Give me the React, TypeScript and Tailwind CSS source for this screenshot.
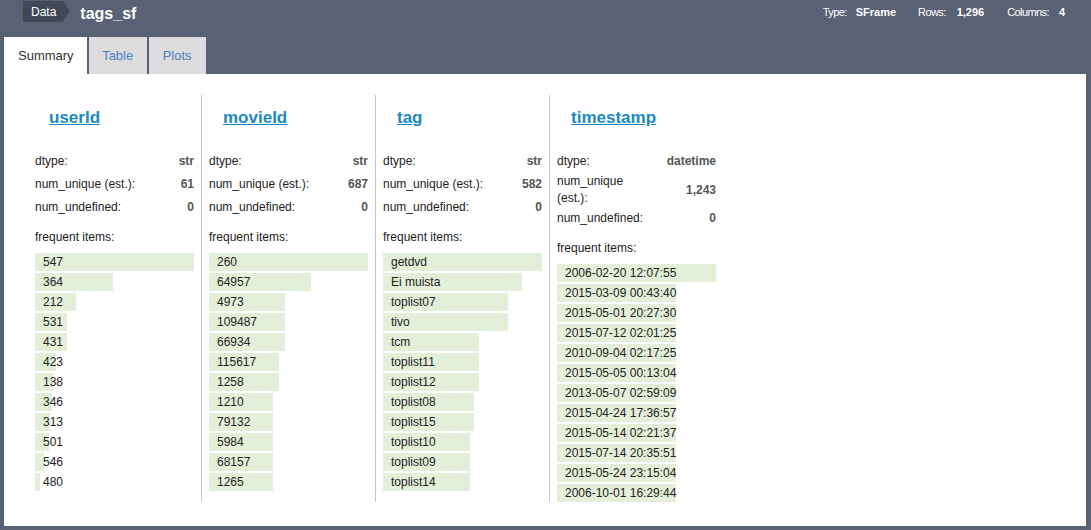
import React from 'react';

type Column = {
  name: string;
  dtype: string;
  unique: string;
  undefinedCount: string;
  items: [string, number][];
};

const COLUMNS: Column[] = [
  {
    name: 'userId', dtype: 'str', unique: '61', undefinedCount: '0',
    items: [['547', 159], ['364', 78], ['212', 41], ['531', 32], ['431', 32], ['423', 21], ['138', 18], ['346', 17], ['313', 15], ['501', 14], ['546', 9], ['480', 5]],
  },
  {
    name: 'movieId', dtype: 'str', unique: '687', undefinedCount: '0',
    items: [['260', 159], ['64957', 102], ['4973', 76], ['109487', 76], ['66934', 76], ['115617', 70], ['1258', 70], ['1210', 64], ['79132', 64], ['5984', 64], ['68157', 64], ['1265', 64]],
  },
  {
    name: 'tag', dtype: 'str', unique: '582', undefinedCount: '0',
    items: [['getdvd', 159], ['Ei muista', 139], ['toplist07', 125], ['tivo', 125], ['tcm', 96], ['toplist11', 96], ['toplist12', 96], ['toplist08', 91], ['toplist15', 91], ['toplist10', 87], ['toplist09', 87], ['toplist14', 87]],
  },
  {
    name: 'timestamp', dtype: 'datetime', unique: '1,243', undefinedCount: '0',
    items: [
      ['2006-02-20 12:07:55', 159], ['2015-03-09 00:43:40', 119], ['2015-05-01 20:27:30', 119], ['2015-07-12 02:01:25', 119],
      ['2010-09-04 02:17:25', 119], ['2015-05-05 00:13:04', 119], ['2013-05-07 02:59:09', 119], ['2015-04-24 17:36:57', 119],
      ['2015-05-14 02:21:37', 119], ['2015-07-14 20:35:51', 119], ['2015-05-24 23:15:04', 119], ['2006-10-01 16:29:44', 119],
    ],
  },
];

function SummaryColumn({ col, first }: { col: Column; first: boolean }) {
  return (
    <div className={first ? 'w-[174px] pl-[8px] pr-[7px]' : 'w-[174px] border-l border-[#c6c6c6] pl-[7px] pr-[7px]'}>
      {/* column title */}
      <div className="pt-[13px] mb-[22px] pl-[14px] leading-[20px]">
        <a className="text-[17px] font-bold text-[#1c8ac0] underline">{col.name}</a>
      </div>

      {/* stats */}
      <div className="grid grid-cols-[1fr_auto] gap-x-[12px] auto-rows-[minmax(23px,auto)] items-center text-[12px] leading-[17px]">
        <span className="text-[#222]">dtype:</span>
        <span className="text-right font-bold text-[#555]">{col.dtype}</span>
        <span className="text-[#222]">num_unique (est.):</span>
        <span className="text-right font-bold text-[#555]">{col.unique}</span>
        <span className="text-[#222]">num_undefined:</span>
        <span className="text-right font-bold text-[#555]">{col.undefinedCount}</span>
      </div>

      <div className="mt-[10px] text-[12px] leading-[17px] text-[#222]">frequent items:</div>

      <div className="mt-[7px] flex flex-col gap-[2px]">
        {col.items.map(([label, w], i) => (
          <div key={i} className="h-[18px] bg-[#e3efd8]" style={{ width: w }}>
            <span className="block pl-[8px] text-[12px] leading-[18px] text-[#222] whitespace-nowrap">{label}</span>
          </div>
        ))}
      </div>
    </div>
  );
}

export default function App() {
  return (
    <div className="h-[530px] w-full overflow-hidden bg-[#596275] font-['Liberation_Sans',Arial,sans-serif]">
      {/* top bar */}
      <div className="h-[37px] flex items-start pl-[23px] pt-[1px]">
        <div className="flex items-start">
          <div className="h-[21px] bg-[#404856] pl-[8px] pr-[7px] pt-[2px] text-[12px] leading-[19px] text-white">Data</div>
          <div className="w-0 h-0 border-y-[10.5px] border-y-transparent border-l-[7px] border-l-[#404856]" />
        </div>
        <div className="ml-[10px] mt-[2px] text-[16px] font-bold leading-[21px] text-white">tags_sf</div>

        <div className="ml-auto pr-[26px] pt-[3px] flex items-baseline text-white">
          <span className="text-[11px] tracking-[-0.6px]">Type:</span>
          <span className="ml-[9px] text-[11px] font-bold">SFrame</span>
          <span className="ml-[22px] text-[11px] tracking-[-0.6px]">Rows:</span>
          <span className="ml-[11px] text-[11px] font-bold">1,296</span>
          <span className="ml-[23px] text-[11px] tracking-[-0.6px]">Columns:</span>
          <span className="ml-[10px] text-[11px] font-bold">4</span>
        </div>
      </div>

      {/* tabs */}
      <div className="h-[37px] flex pl-[4px] gap-[2px] text-[13px]">
        <div className="bg-white pl-[14px] pr-[13px] flex items-center text-[#333]">Summary</div>
        <div className="bg-[#dcdcdc] px-[13.5px] flex items-center text-[#4a7fc0]">Table</div>
        <div className="bg-[#dcdcdc] px-[14px] flex items-center text-[#4a7fc0]">Plots</div>
      </div>

      {/* summary panel */}
      <div className="ml-[4px] mr-[5px] bg-white pt-[21px] pb-[24px] pl-[23px]">
        <div className="flex items-stretch">
          {COLUMNS.map((col, i) => (
            <SummaryColumn key={col.name} col={col} first={i === 0} />
          ))}
        </div>
      </div>
    </div>
  );
}
